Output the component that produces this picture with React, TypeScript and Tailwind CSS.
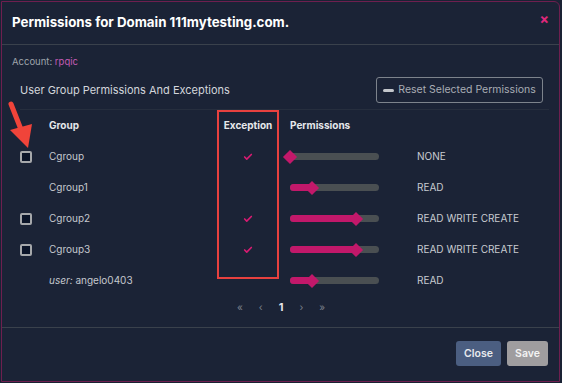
import { Check } from "lucide-react";

type Row = {
  name: React.ReactNode;
  checkbox: boolean;
  exception: boolean;
  level: number;
  label: string;
};

const rows: Row[] = [
  { name: "Cgroup", checkbox: true, exception: true, level: 0, label: "NONE" },
  { name: "Cgroup1", checkbox: false, exception: false, level: 25, label: "READ" },
  { name: "Cgroup2", checkbox: true, exception: true, level: 74, label: "READ WRITE CREATE" },
  { name: "Cgroup3", checkbox: true, exception: true, level: 74, label: "READ WRITE CREATE" },
  {
    name: (
      <>
        <span className="italic">user:</span> angelo0403
      </>
    ),
    checkbox: false,
    exception: false,
    level: 25,
    label: "READ",
  },
];

export default function App() {
  return (
    <div
      className="relative h-[383px] w-[562px] overflow-hidden bg-[#1a2234] p-px text-[#c9ccd2]"
      style={{ fontFamily: "Inter, 'Noto Sans', sans-serif" }}
    >
      <div className="flex h-[381px] w-[559px] flex-col rounded-tr-md border border-[#6e1f4f] bg-[#1b2336]">
        {/* header */}
        <div className="flex h-[43px] items-center justify-between border-b border-[#3a414c] pl-[10px] pr-[10px]">
          <h1 className="text-[13.3px] font-bold text-white">
            Permissions for Domain 111mytesting.com.
          </h1>
          <span className="-mt-[8px] text-[14px] font-bold leading-none text-[#e0287c]">×</span>
        </div>

        {/* body */}
        <div className="border-b border-[#3a414c] px-[10px] pb-[8px]">
          <p className="mt-[9px] text-[9.5px] leading-[16px] text-[#9ea3ab]">
            Account: <span className="text-[#c45bb5]">rpqic</span>
          </p>

          <div className="ml-[8px] mt-[7px] flex items-center justify-between border-b border-[#262e3e] pb-[6px] pr-[6px]">
            <h2 className="text-[11px] text-[#d3d6db]">User Group Permissions And Exceptions</h2>
            <button className="flex h-[26px] w-[167px] items-center justify-center gap-[4px] whitespace-nowrap rounded-[3px] border border-[#7d838c] text-[10.5px] text-[#a9adb4]">
              <span className="h-[3px] w-[11px] rounded-full bg-[#c4c7cc]" />
              Reset Selected Permissions
            </button>
          </div>

          <div className="ml-[8px]">
            <div className="flex h-[31px] items-center text-[10px] font-bold text-[#e6e8eb]">
              <div className="w-[29px]" />
              <div className="w-[168px]">Group</div>
              <div className="w-[62px] text-center">Exception</div>
              <div className="w-[11px]" />
              <div>Permissions</div>
            </div>

            {rows.map((r, i) => (
              <div key={i} className="flex h-[31px] items-center text-[10px] text-[#c5c8ce]">
                <div className="w-[29px]">
                  {r.checkbox && (
                    <div className="mt-px h-[12px] w-[12px] rounded-[2px] border-2 border-[#a6a8ab] bg-[#0b1428]" />
                  )}
                </div>
                <div className="w-[168px]">{r.name}</div>
                <div className="flex w-[62px] justify-center">
                  {r.exception && <Check size={10} strokeWidth={4} className="text-[#d81b72]" />}
                </div>
                <div className="w-[11px]" />
                <div className="relative h-[7px] w-[89px] rounded-full bg-[#4a4f52]">
                  <div
                    className="absolute left-0 top-0 h-[7px] rounded-l-full bg-[#c2186a]"
                    style={{ width: `${r.level}%` }}
                  />
                  <div
                    className="absolute top-1/2 h-[10px] w-[10px] -translate-x-1/2 -translate-y-1/2 rotate-45 bg-[#c2186a]"
                    style={{ left: `${r.level}%` }}
                  />
                </div>
                <div className="w-[38px]" />
                <div className="text-[#c9ccd1]">{r.label}</div>
              </div>
            ))}

            <div className="flex h-[23px] items-center justify-center gap-[16px] pr-[7px] text-[10px] text-[#7a808a]">
              <span>«</span>
              <span>‹</span>
              <span className="text-[11px] font-bold text-[#e4e6ea]">1</span>
              <span>›</span>
              <span>»</span>
            </div>
          </div>
        </div>

        {/* footer */}
        <div className="flex justify-end gap-[6px] pr-[11px] pt-[13px]">
          <button className="h-[25px] w-[45px] rounded-[3px] bg-[#4b5e81] text-[10.5px] font-semibold text-[#e8eaee]">
            Close
          </button>
          <button className="h-[25px] w-[41px] rounded-[3px] bg-[#9f9d9f] text-[10.5px] font-semibold text-[#f3f3f3]">
            Save
          </button>
        </div>
      </div>

      {/* annotations */}
      <div className="absolute left-[217px] top-[110px] h-[169px] w-[62px] border-2 border-[#e8413f]" />
      <svg className="absolute left-[4px] top-[100px]" width="30" height="52" viewBox="0 0 30 52">
        <line x1="7" y1="4" x2="18" y2="32" stroke="#f0443a" strokeWidth="5" strokeLinecap="round" />
        <polygon points="6,30 28,24 24,48" fill="#f0443a" />
      </svg>
    </div>
  );
}
